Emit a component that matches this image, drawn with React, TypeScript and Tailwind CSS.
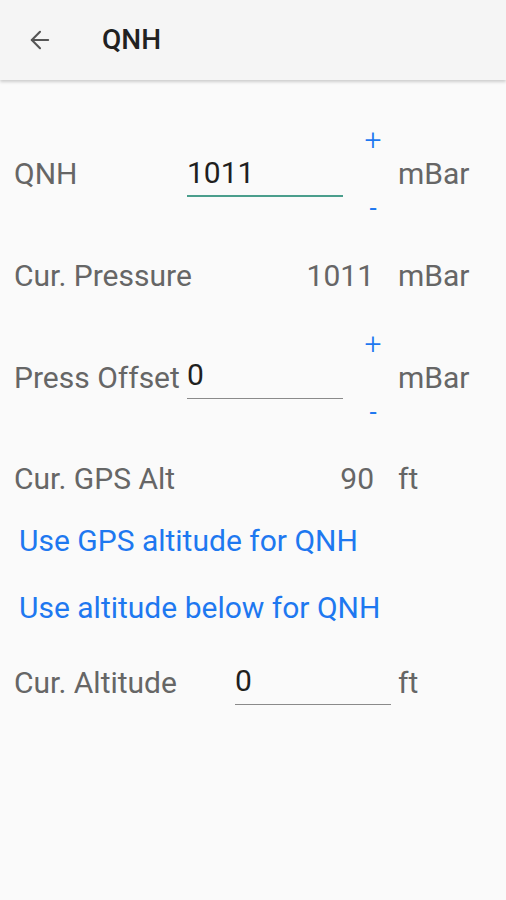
import { ArrowLeft } from 'lucide-react';

const font = { fontFamily: 'Roboto, "Noto Sans", sans-serif' };

const PlusMinus = () => (
  <div className="w-[30px] h-[102px] flex flex-col justify-between items-center text-[#1e78f0]">
    <div className="h-[34px] leading-[34px] text-[30px] font-light">+</div>
    <div className="h-[34px] leading-[34px] text-[26px]">-</div>
  </div>
);

export default function App() {
  return (
    <div className="w-[506px] h-[900px] bg-[#fafafa] text-[30px] whitespace-nowrap" style={font}>
      {/* Toolbar */}
      <div className="h-[80px] bg-[#f5f5f5] flex items-center shadow-[0_2px_3px_rgba(0,0,0,0.18)] relative z-10">
        <ArrowLeft className="ml-[26px] text-[#555]" size={28} strokeWidth={1.8} />
        <div className="ml-[48px] text-[#212121] font-medium text-[28px]">QNH</div>
      </div>

      <div className="pt-[43px]">
        {/* QNH */}
        <div className="h-[102px] flex items-center px-[14px]">
          <div className="w-[173px] shrink-0 text-[#666] leading-[34px]">QNH</div>
          <div className="w-[156px] shrink-0 leading-[34px] pt-[4px] pb-[5px] border-b-2 border-[#4a9e8c] text-[#1f1f1f]">1011</div>
          <div className="ml-[15px]"><PlusMinus /></div>
          <div className="ml-[10px] text-[#666] leading-[34px]">mBar</div>
        </div>

        {/* Cur. Pressure */}
        <div className="h-[102px] flex items-center px-[14px]">
          <div className="w-[173px] shrink-0 text-[#666] leading-[34px]">Cur. Pressure</div>
          <div className="w-[187px] shrink-0 text-right text-[#666] leading-[34px]">1011</div>
          <div className="ml-[24px] text-[#666] leading-[34px]">mBar</div>
        </div>

        {/* Press Offset */}
        <div className="h-[102px] flex items-center px-[14px]">
          <div className="w-[173px] shrink-0 text-[#666] leading-[34px]">Press Offset</div>
          <div className="w-[156px] shrink-0 leading-[34px] pt-[1px] pb-[6px] border-b border-[#8a8a8a] text-[#1f1f1f]">0</div>
          <div className="ml-[15px]"><PlusMinus /></div>
          <div className="ml-[10px] text-[#666] leading-[34px]">mBar</div>
        </div>

        {/* Cur. GPS Alt */}
        <div className="mt-[20px] h-[60px] flex items-center px-[14px]">
          <div className="w-[173px] shrink-0 text-[#666] leading-[34px]">Cur. GPS Alt</div>
          <div className="w-[187px] shrink-0 text-right text-[#666] leading-[34px]">90</div>
          <div className="ml-[24px] text-[#666] leading-[34px]">ft</div>
        </div>

        <div className="h-[62px] flex items-center px-[19px] text-[#1e78f0]">Use GPS altitude for QNH</div>
        <div className="h-[72px] flex items-center px-[19px] text-[#1e78f0]">Use altitude below for QNH</div>

        {/* Cur. Altitude */}
        <div className="h-[80px] flex items-center px-[14px]">
          <div className="w-[221px] shrink-0 text-[#666] leading-[34px]">Cur. Altitude</div>
          <div className="w-[156px] shrink-0 leading-[34px] pt-[2px] pb-[6px] border-b border-[#8a8a8a] text-[#1f1f1f]">0</div>
          <div className="ml-[7px] text-[#666] leading-[34px]">ft</div>
        </div>
      </div>
    </div>
  );
}
